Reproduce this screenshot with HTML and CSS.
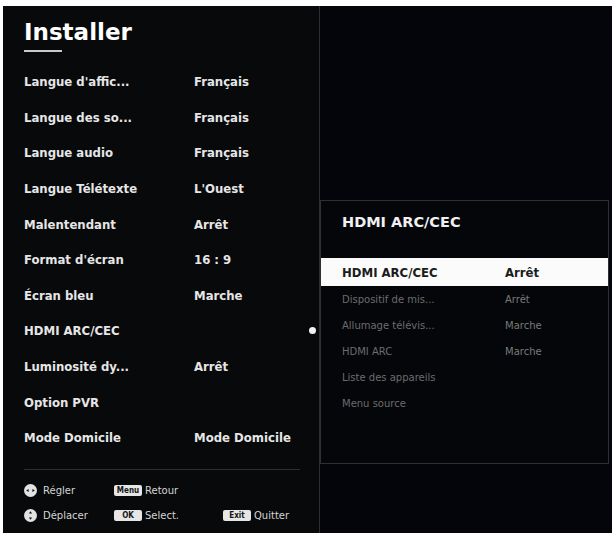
FILE: index.html
```html
<!DOCTYPE html>
<html lang="fr">
<head>
<meta charset="utf-8">
<title>Installer</title>
<link rel="stylesheet" href="styles.css">
</head>
<body>
<div class="screen">
  <section class="left">
    <h1 class="title">Installer</h1>
    <div class="title-rule"></div>
    <ul class="menu">
      <li class="row"><span>Langue d'affic...</span><span>Français</span></li>
      <li class="row"><span>Langue des so...</span><span>Français</span></li>
      <li class="row"><span>Langue audio</span><span>Français</span></li>
      <li class="row"><span>Langue Télétexte</span><span>L'Ouest</span></li>
      <li class="row"><span>Malentendant</span><span>Arrêt</span></li>
      <li class="row"><span>Format d'écran</span><span>16 : 9</span></li>
      <li class="row"><span>Écran bleu</span><span>Marche</span></li>
      <li class="row"><span>HDMI ARC/CEC</span><span></span><span class="dot"></span></li>
      <li class="row"><span>Luminosité dy...</span><span>Arrêt</span></li>
      <li class="row"><span>Option PVR</span><span></span></li>
      <li class="row"><span>Mode Domicile</span><span>Mode Domicile</span></li>
    </ul>
    <div class="sep"></div>
    <div class="legend">
      <div class="key">
        <svg class="pad" viewBox="0 0 13 13" width="13" height="13"><circle cx="6.5" cy="6.5" r="6.5" fill="#e2e2e2"/><polygon points="2.2,6.5 4.6,4.9 4.6,8.1" fill="#111"/><polygon points="10.8,6.5 8.4,4.9 8.4,8.1" fill="#111"/></svg>
        <span>Régler</span>
      </div>
      <div class="key"><span class="badge">Menu</span><span>Retour</span></div>
      <div class="key"></div>
      <div class="key">
        <svg class="pad" viewBox="0 0 13 13" width="13" height="13"><circle cx="6.5" cy="6.5" r="6.5" fill="#e2e2e2"/><polygon points="6.5,2.2 4.9,4.6 8.1,4.6" fill="#111"/><polygon points="6.5,10.8 4.9,8.4 8.1,8.4" fill="#111"/></svg>
        <span>Déplacer</span>
      </div>
      <div class="key"><span class="badge">OK</span><span>Select.</span></div>
      <div class="key"><span class="badge">Exit</span><span>Quitter</span></div>
    </div>
  </section>
  <section class="right">
    <div class="sub">
      <h2 class="sub-title">HDMI ARC/CEC</h2>
      <ul class="sub-list">
        <li class="sub-row active"><span>HDMI ARC/CEC</span><span>Arrêt</span></li>
        <li class="sub-row"><span>Dispositif de mis...</span><span>Arrêt</span></li>
        <li class="sub-row"><span>Allumage télévis...</span><span>Marche</span></li>
        <li class="sub-row"><span>HDMI ARC</span><span>Marche</span></li>
        <li class="sub-row"><span>Liste des appareils</span><span></span></li>
        <li class="sub-row"><span>Menu source</span><span></span></li>
      </ul>
    </div>
  </section>
</div>
</body>
</html>
```

FILE: styles.css
```css
* { box-sizing: border-box; }
html, body { margin: 0; padding: 0; }
body {
  background: #ffffff;
  width: 612px;
  height: 537px;
  overflow: hidden;
  font-family: "DejaVu Sans", sans-serif;
}
.screen {
  margin: 6px 0 0 3px;
  height: 527px;
  display: flex;
  background: #03050a;
}
.left {
  width: 317px;
  flex: none;
  background: #08090b;
  border-right: 1px solid #2c2e31;
  padding: 0 3px 0 21px;
  display: flex;
  flex-direction: column;
}
.title {
  margin: 11px 0 0;
  font-size: 23px;
  line-height: 30px;
  font-weight: bold;
  color: #ffffff;
  letter-spacing: 0;
}
.title-rule {
  width: 38px;
  height: 2px;
  margin-top: 3px;
  background: #c9c9c9;
}
.menu {
  list-style: none;
  margin: 12px 0 0;
  padding: 0;
}
.row {
  display: grid;
  grid-template-columns: 170px 1fr 7px;
  align-items: center;
  height: 35.6px;
  font-family: "DejaVu Sans Condensed", "DejaVu Sans", sans-serif;
  font-stretch: condensed;
  font-weight: bold;
  font-size: 13px;
  color: #e6e6e6;
  white-space: nowrap;
}
.dot {
  width: 7px;
  height: 7px;
  border-radius: 50%;
  background: #f2f2f2;
}
.sep {
  width: 276px;
  height: 1px;
  background: #2e2f31;
  margin-top: 13px;
}
.legend {
  margin-top: 8px;
  display: grid;
  grid-template-columns: 90px 109px 1fr;
  grid-auto-rows: 25px;
  font-size: 10px;
  color: #d4d4d4;
}
.key {
  display: flex;
  align-items: center;
  gap: 6px;
  white-space: nowrap;
}
.pad { flex: none; }
.badge {
  display: inline-block;
  width: 28px;
  height: 11px;
  line-height: 11px;
  border-radius: 2px;
  background: #e6e6e6;
  color: #151515;
  font-family: "DejaVu Sans Condensed", "DejaVu Sans", sans-serif;
  font-stretch: condensed;
  font-weight: bold;
  font-size: 8px;
  text-align: center;
  margin-right: -3px;
}
.right {
  flex: 1;
  padding-top: 194px;
}
.sub {
  width: 289px;
  height: 264px;
  border: 1px solid #2d3135;
  background: #040609;
}
.sub-title {
  margin: 0;
  padding: 10px 0 0 21px;
  height: 57px;
  font-size: 14.5px;
  line-height: 22px;
  font-weight: bold;
  color: #f0f0f0;
}
.sub-list {
  list-style: none;
  margin: 0;
  padding: 0;
}
.sub-row {
  display: grid;
  grid-template-columns: 163px 1fr;
  align-items: center;
  height: 26px;
  padding-left: 21px;
  font-size: 10px;
  color: #6c6c6c;
  white-space: nowrap;
}
.sub-row span:last-child { color: #7a7a7a; }
.sub-row.active {
  height: 28px;
  background: #fbfbfb;
  color: #1c1c1c;
  font-family: "DejaVu Sans Condensed", "DejaVu Sans", sans-serif;
  font-stretch: condensed;
  font-weight: bold;
  font-size: 13px;
}
.sub-row.active span:last-child { color: #1c1c1c; }
```
